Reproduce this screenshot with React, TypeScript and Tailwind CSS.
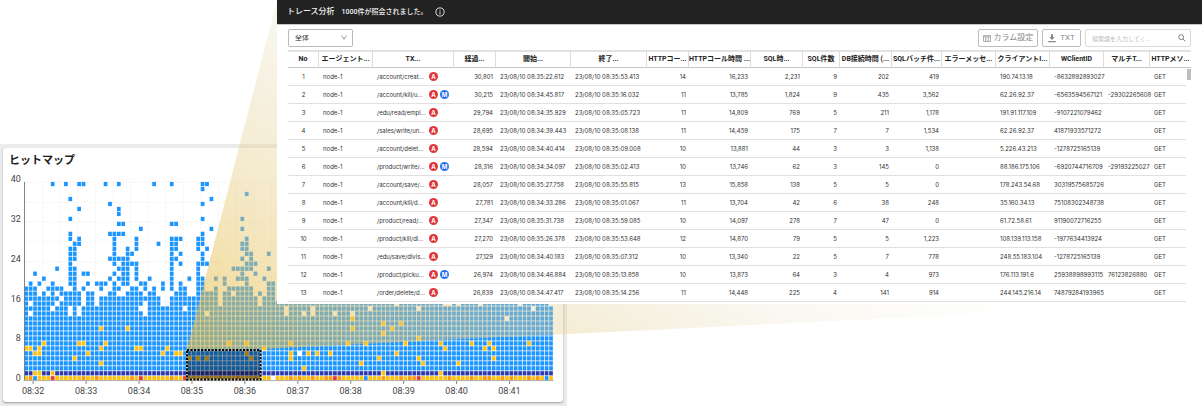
import React from "react";

const COLS = 120;
const PITCH_X = 4.41;
const PITCH_Y = 4.98;

// Occupied columns of the sparse rows, keyed by row index from the bottom.
const SPARSE: Record<number, string> = {
  39: "6 9 12 13 18 21 29 33 40 41",
  38: "40",
  37: "50",
  36: "10 42",
  35: "19 40",
  34: "12 21",
  33: "21",
  32: "10 40 49",
  31: "21 22 33 34",
  30: "26 42 49",
  29: "10 19-22 40",
  28: "10 12 20 25 33-35 39 40 50",
  27: "11 12 20 25 30 33 34 39 40 49 50",
  26: "10 11 20 23 25 33 34 39 41 49 50",
  25: "10 11 20 23 24 33 35 40 50 51 55",
  24: "10 11 19-23 33 34 40 49 51",
  23: "10 20 22-25 33 35 39-41 50-52",
  22: "7 10 11 21-23 25 33 39 47-51 55",
  21: "2 10 11 13 14 20 22 23 25 33 39 49 52",
  20: "4 10 11 19 21-23 25 28 33 37 39 40 43 45 48-50 54",
  19: "1 3 6 10 11 14 16-18 20 22 23 26 27 31 33 35 39 40 45 50 55 56",
  18: "0-2 5-8 11 13 17 20 21 24 25 27 29 31 33 35 36 39 40 43 46-51 55 56",
  17: "0-2 4 6 8-12 14 15 19 20 23-26 28 29 34-36 39-43 45 46 48-51 53 55 56",
  16: "0-7 9-12 14 15 17-30 33-43 45-52 54-56",
};

// Empty columns of the dense rows.
const HOLES: Record<number, string> = {
  15: "1 7 13 16 27 31 32 44 53 84 95 96 98 103 112 119",
  14: "6 10 12 26 27 36 59 65 78 89 115",
  13: "1 10 12 27 41 59 63 65 70 74",
  12: "109",
  5: "62",
  0: "56",
};

const YELLOW: Record<number, string> = {
  12: "74",
  11: "81 85",
  10: "17 23 74 83",
  9: "81",
  8: "89",
  7: "4 12 13 18 46 50 60 73 77 86 94 101 105 114",
  6: "0 1 3 17 25 26 32 54 95 104 106",
  5: "2 3 14 31 34 35 50 60 64 66 69 84",
  4: "11 37 39 41 51 60 80 89 106",
  3: "17 76 90 98",
  2: "63",
  1: "2 3 6 81 94",
};

const ORANGE = "1 13 16 24 33 41 44 48 52 60 62 65 68 69 71 81 85 87 88 96 101 104 105 108 110 114 116";
const RED = "6 26 36 70 89";
const BOTTOM_BLUE = "2 77 118";

function expand(spec: string | undefined): Set<number> {
  const out = new Set<number>();
  if (!spec) return out;
  for (const part of spec.split(" ")) {
    const [a, b] = part.split("-").map(Number);
    for (let i = a; i <= (b ?? a); i++) out.add(i);
  }
  return out;
}

type Cell = { c: number; r: number; fill: string };

function buildCells(): Cell[] {
  const cells: Cell[] = [];
  const orange = expand(ORANGE);
  const red = expand(RED);
  const blue = expand(BOTTOM_BLUE);
  for (let r = 0; r < 40; r++) {
    const present = expand(SPARSE[r]);
    const holes = expand(HOLES[r]);
    const yellow = expand(YELLOW[r]);
    for (let c = 0; c < COLS; c++) {
      if (r > 15 ? !present.has(c) : holes.has(c)) continue;
      let fill = "#1b95ff";
      if (r === 1) fill = "#2d3aab";
      if (r === 0) {
        fill = red.has(c) ? "#e5393f" : blue.has(c) ? "#1b95ff" : orange.has(c) ? "#ff9a0c" : "#fec110";
      }
      if (yellow.has(c)) fill = "#fec110";
      cells.push({ c, r, fill });
    }
  }
  return cells;
}

const CELLS = buildCells();
const TIMES = ["08:32", "08:33", "08:34", "08:35", "08:36", "08:37", "08:38", "08:39", "08:40", "08:41"];

function HeatMap() {
  return (
    <svg viewBox="3 172 560 230" className="block w-full" role="img" aria-label="ヒットマップ">
      <g stroke="#e4e4e4" strokeWidth="0.6" strokeDasharray="1.2 1.6">
        {Array.from({ length: 10 }, (_, i) => (
          <line key={i} x1="25" x2="553" y1={182.3 + i * 19.85} y2={182.3 + i * 19.85} />
        ))}
        {Array.from({ length: 30 }, (_, i) => (
          <line key={i} y1="182" y2="380" x1={42.6 + i * 17.6} x2={42.6 + i * 17.6} />
        ))}
      </g>
      {CELLS.map(({ c, r, fill }) => (
        <rect
          key={`${c}-${r}`}
          x={24.35 + c * PITCH_X}
          y={376.15 - r * PITCH_Y}
          width="3.7"
          height="4.25"
          fill={fill}
        />
      ))}
      <rect x="187" y="350" width="73.5" height="29.5" fill="url(#selectionShade)" />
      <defs>
        <linearGradient id="selectionShade" x1="0" y1="0" x2="0" y2="1">
          <stop offset="0" stopColor="#000" stopOpacity="0.36" />
          <stop offset="1" stopColor="#000" stopOpacity="0.42" />
        </linearGradient>
      </defs>
      <path d="M24.5 182V380.6" stroke="#777" strokeWidth="0.9" />
      <path d="M24.3 380.6H553.5" stroke="#a5a5a5" strokeWidth="0.9" />
      <rect x="187" y="350" width="73.5" height="29.5" fill="none" stroke="#e8e4d0" strokeWidth="1.4" />
      <rect x="187" y="350" width="73.5" height="29.5" fill="none" stroke="#000" strokeWidth="1.9" strokeDasharray="2.2 1.3" />
      <g fontSize="9" fill="#444" fontFamily="Roboto, sans-serif">
        {[40, 32, 24, 16, 8, 0].map((n, i) => (
          <text key={n} x="20.8" y={182.2 + i * 39.8} textAnchor="end">
            {n}
          </text>
        ))}
        {TIMES.map((t, i) => (
          <g key={t}>
            <path d={`M${33.2 + i * 52.92} 381v3`} stroke="#888" strokeWidth="1" />
            <text x={33.2 + i * 52.92} y="394" textAnchor="middle">
              {t}
            </text>
          </g>
        ))}
      </g>
    </svg>
  );
}

function Beam() {
  return (
    <svg className="pointer-events-none absolute top-0 left-0" width="1202" height="406" aria-hidden="true">
      <defs>
        <linearGradient id="beam" gradientUnits="userSpaceOnUse" x1="187" y1="350" x2="440" y2="-55">
          <stop offset="0" stopColor="#eabb3c" stopOpacity="0.62" />
          <stop offset="0.1" stopColor="#e9be48" stopOpacity="0.54" />
          <stop offset="0.4" stopColor="#e6cd87" stopOpacity="0.4" />
          <stop offset="0.51" stopColor="#e0cc90" stopOpacity="0.32" />
          <stop offset="0.7" stopColor="#ddd0a0" stopOpacity="0.17" />
          <stop offset="1" stopColor="#ddd0a0" stopOpacity="0" />
        </linearGradient>
      </defs>
      <path d="M187 349L277 0H1202V303L261 349Z" fill="url(#beam)" />
    </svg>
  );
}

type Align = "center" | "left" | "right";
const COLUMNS: { label: string; col: string; align: Align }[] = [
  { label: "No", col: "w-[31px]", align: "center" },
  { label: "エージェント...", col: "w-[54px]", align: "left" },
  { label: "TX...", col: "w-[81px]", align: "left" },
  { label: "経過...", col: "w-[42px]", align: "right" },
  { label: "開始...", col: "w-[75px]", align: "left" },
  { label: "終了...", col: "w-[76px]", align: "left" },
  { label: "HTTPコー...", col: "w-[42px]", align: "right" },
  { label: "HTTPコール時間 ...", col: "w-[62px]", align: "right" },
  { label: "SQL時...", col: "w-[52px]", align: "right" },
  { label: "SQL件数", col: "w-[37px]", align: "right" },
  { label: "DB接続時間 (...", col: "w-[52px]", align: "right" },
  { label: "SQLバッチ件...", col: "w-[50px]", align: "right" },
  { label: "エラーメッセ...", col: "w-[54px]", align: "left" },
  { label: "クライアントI...", col: "w-[54px]", align: "left" },
  { label: "WClientID", col: "w-[54px]", align: "left" },
  { label: "マルチT...", col: "w-[46px]", align: "left" },
  { label: "HTTPメソ...", col: "w-[36px]", align: "left" },
];

const ALIGN: Record<Align, string> = {
  center: "text-center",
  left: "text-left pl-1",
  right: "text-right pr-[3px]",
};

const ROWS: string[][] = [
  ["/account/creat...", "A", "30,801", "08:35:22.612", "08:35:53.413", "14", "16,233", "2,231", "9", "202", "419", "190.74.13.18", "-8632892893027", ""],
  ["/account/kill/u...", "AM", "30,215", "08:34:45.817", "08:35:16.032", "11", "13,785", "1,824", "9", "435", "3,562", "62.26.92.37", "-6563594567121", "-29302265608"],
  ["/edu/read/empl...", "A", "29,794", "08:34:35.929", "08:35:05.723", "11", "14,809", "769", "5", "211", "1,178", "191.91.117.109", "-9107221079462", ""],
  ["/sales/write/un...", "A", "28,695", "08:34:39.443", "08:35:08.138", "11", "14,459", "175", "7", "7", "1,534", "62.26.92.37", "41871933571272", ""],
  ["/account/delet...", "A", "28,594", "08:34:40.414", "08:35:09.008", "10", "13,881", "44", "3", "3", "1,138", "5.226.43.213", "-1278725165139", ""],
  ["/product/write/...", "AM", "28,316", "08:34:34.097", "08:35:02.413", "10", "13,746", "62", "3", "145", "0", "88.186.175.106", "-6920744716709", "-29193225027"],
  ["/account/save/...", "A", "28,057", "08:35:27.758", "08:35:55.815", "13", "15,858", "138", "5", "5", "0", "178.243.54.68", "30319575685726", ""],
  ["/account/kill/d...", "A", "27,781", "08:34:33.286", "08:35:01.067", "11", "13,704", "42", "6", "38", "248", "35.160.34.13", "75108302348738", ""],
  ["/product/read/...", "A", "27,347", "08:35:31.738", "08:35:59.085", "10", "14,097", "278", "7", "47", "0", "61.72.58.61", "91190072716255", ""],
  ["/product/kill/di...", "A", "27,270", "08:35:26.378", "08:35:53.648", "12", "14,870", "79", "5", "5", "1,223", "108.139.113.158", "-1977634413924", ""],
  ["/edu/save/divis...", "A", "27,129", "08:34:40.183", "08:35:07.312", "10", "13,340", "22", "5", "7", "778", "248.55.183.104", "-1278725165139", ""],
  ["/product/picku...", "AM", "26,974", "08:34:46.884", "08:35:13.858", "10", "13,873", "64", "3", "4", "973", "176.113.191.6", "25938898993115", "76123826880"],
  ["/order/delete/d...", "A", "26,839", "08:34:47.417", "08:35:14.256", "11", "14,448", "225", "4", "141", "914", "244.145.216.14", "74879284193965", ""],
];

function TxCell({ path, marks }: { path: string; marks: string }) {
  return (
    <span className="flex items-center gap-[2px]">
      <span className="w-[50px] shrink-0">{path}</span>
      <span className="flex size-[9px] items-center justify-center rounded-full bg-[#e0353a] text-[6px] leading-none font-bold text-white">
        A
      </span>
      {marks === "AM" && (
        <span className="flex size-[9px] items-center justify-center rounded-full bg-[#2470f0] text-[6px] leading-none font-bold text-white">
          M
        </span>
      )}
    </span>
  );
}

function TraceTable() {
  return (
    <div className="relative">
      <table className="w-full table-fixed border-separate border-spacing-0 whitespace-nowrap text-[#333]">
        <colgroup>
          {COLUMNS.map((c) => (
            <col key={c.label} className={c.col} />
          ))}
          <col className="w-[5px]" />
        </colgroup>
        <thead>
          <tr className="h-[18px] text-[7px] leading-none text-[#222]">
            {COLUMNS.map((c, i) => (
              <th
                key={c.label}
                scope="col"
                colSpan={i === COLUMNS.length - 1 ? 2 : 1}
                className="border-t-2 border-r border-b border-t-[#e2e2e2] border-r-[#dddddd] border-b-[#c4c4c4] p-0 text-center font-bold last:border-r-0"
              >
                {c.label}
              </th>
            ))}
          </tr>
        </thead>
        <tbody>
          {ROWS.map((row, i) => {
            const [path, marks, elapsed, start, end, ...rest] = row;
            const cells: React.ReactNode[] = [
              i + 1,
              "node-1",
              <TxCell path={path} marks={marks} />,
              elapsed,
              `23/08/10 ${start}`,
              `23/08/10 ${end}`,
              ...rest.slice(0, 6),
              "",
              ...rest.slice(6),
              "GET",
            ];
            return (
              <tr key={path} className="h-[18px] font-['Inter','Roboto',sans-serif] text-[6px] leading-none">
                {cells.map((cell, j) => (
                  <td key={j} className={`border-b border-[#e0e0e0] py-0 ${ALIGN[COLUMNS[j].align]}`}>
                    {cell}
                  </td>
                ))}
                <td className="p-0" />
              </tr>
            );
          })}
        </tbody>
      </table>
      <div className="absolute top-[19px] right-0 h-[11px] w-1 bg-[#bdbdbd]" />
    </div>
  );
}

function Toolbar() {
  return (
    <div className="flex items-center gap-1 text-[#888]">
      <div className="relative mr-auto">
        <select
          aria-label="表示範囲"
          className="block h-[18px] w-[65px] appearance-none rounded-[2px] border border-[#b8b8b8] bg-white pl-[6px] text-[7px] leading-none text-[#333]"
        >
          <option>全体</option>
        </select>
        <svg viewBox="0 0 6 5" className="pointer-events-none absolute top-[6px] right-[6px] h-[5px] w-[6px]" fill="none" stroke="#777" strokeWidth="0.8">
          <path d="M0.5 0.7L3 4.2L5.5 0.7" />
        </svg>
      </div>
      <button type="button" className="flex h-[18px] w-[60px] items-center justify-center gap-[3px] rounded-[2px] border border-[#bdbdbd] text-[8px] leading-none whitespace-nowrap">
        <svg viewBox="0 0 8 7" className="h-[7px] w-2 shrink-0" fill="none" stroke="#888" strokeWidth="0.7">
          <path d="M0.4 0.6H7.6V6.4H0.4ZM0.4 1.9H7.6M2.8 1.9V6.4M5.2 1.9V6.4" />
        </svg>
        カラム設定
      </button>
      <button type="button" className="flex h-[18px] w-[39px] items-center justify-center gap-1 rounded-[2px] border border-[#bdbdbd] text-[8px] leading-none">
        <svg viewBox="0 0 8 9" className="h-[9px] w-2 shrink-0" fill="#888">
          <path d="M3 0.3H5V3H6.8L4 6L1.2 3H3ZM0.3 7H7.7V8.2H0.3Z" />
        </svg>
        TXT
      </button>
      <label className="flex h-[18px] w-[106px] items-center rounded-[2px] border border-[#dcdcdc] pr-1 pl-[6px]">
        <input
          type="text"
          aria-label="検索"
          placeholder="検索語を入力してく..."
          className="min-w-0 flex-1 text-[6px] leading-none outline-none placeholder:text-[#bbb]"
        />
        <svg viewBox="0 0 8 8" className="size-2" fill="none" stroke="#777" strokeWidth="0.9">
          <circle cx="3.2" cy="3.2" r="2.4" />
          <path d="M5 5L7.4 7.4" />
        </svg>
      </label>
    </div>
  );
}

export default function App() {
  return (
    <div className="relative grid min-h-screen overflow-hidden bg-white font-['Roboto','Noto_Sans_CJK_JP',sans-serif]">
      <section className="col-start-1 row-start-1 mt-36 w-[567px] bg-[#ececec] px-[3px] pt-1 pb-1">
        <div className="mr-px rounded-[3px] bg-white shadow-[0_1px_2px_rgba(0,0,0,0.35)]">
          <h2 className="h-6 pt-[6px] pl-[6px] text-[11px] leading-[14px] font-bold text-[#222]">ヒットマップ</h2>
          <HeatMap />
        </div>
      </section>
      <Beam />
      <section className="relative col-start-1 row-start-1 ml-[277px] self-start bg-white pb-[2px]">
        <header className="flex h-6 items-center gap-[7px] bg-[#222] pl-[10px] text-[#f0f0f0]">
          <h1 className="text-[8px] leading-none font-medium">トレース分析</h1>
          <p className="text-[7px] leading-none font-medium">1000件が照会されました。</p>
          <svg viewBox="0 0 10 10" className="size-[10px]" fill="none" stroke="#eee" strokeWidth="0.9">
            <circle cx="5" cy="5" r="4.1" />
            <path d="M5 4.5V7.4M5 2.6V3.6" />
          </svg>
        </header>
        <div className="flex flex-col gap-[3px] border-t border-[#c8c8c8] pt-1 pr-[11px] pl-[11px]">
          <Toolbar />
          <TraceTable />
        </div>
      </section>
    </div>
  );
}
